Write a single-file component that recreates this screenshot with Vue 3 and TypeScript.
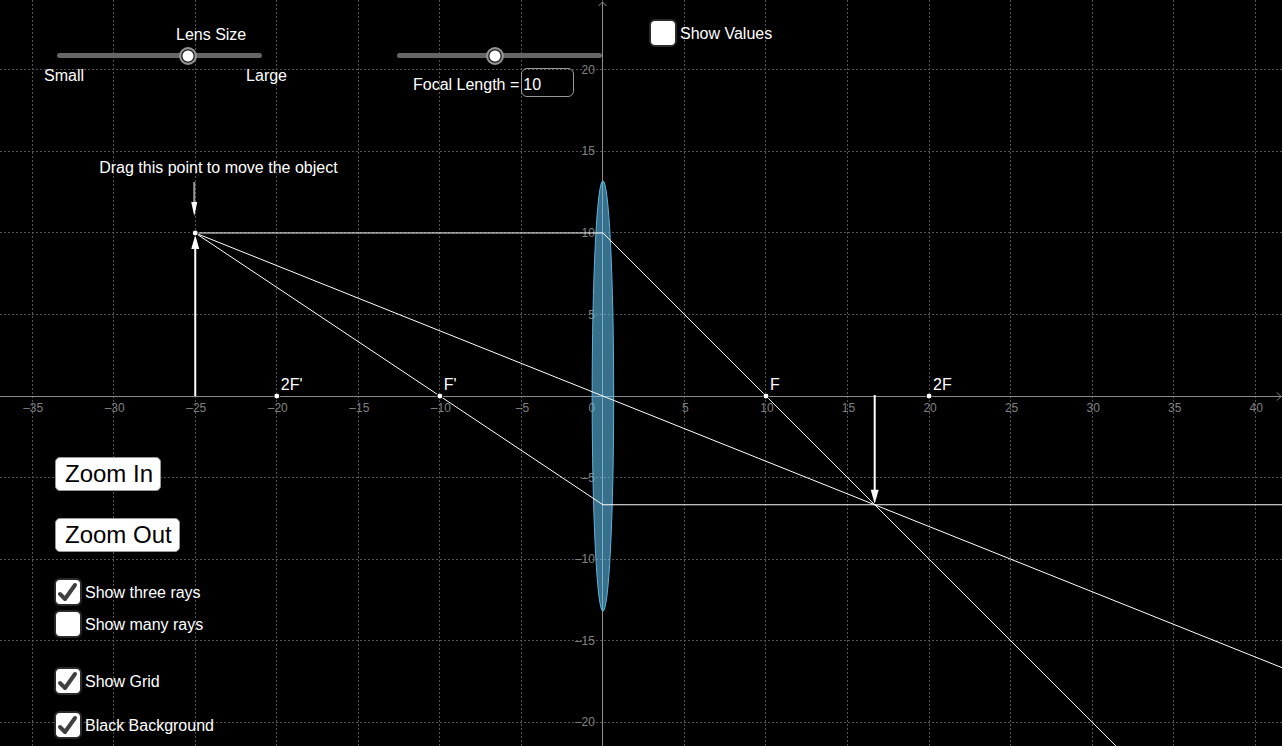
<script setup lang="ts">
import { computed, onBeforeUnmount, onMounted, ref } from 'vue'

interface Point {
  x: number
  y: number
}

const frame = 2
const width = ref(window.innerWidth - frame)
const height = ref(window.innerHeight - frame)

function resize() {
  width.value = window.innerWidth - frame
  height.value = window.innerHeight - frame
}
onMounted(() => window.addEventListener('resize', resize))
onBeforeUnmount(() => window.removeEventListener('resize', resize))

const lensSize = ref(13.2)
const focal = ref(10)
const showValues = ref(false)
const threeRays = ref(true)
const manyRays = ref(false)
const showGrid = ref(true)
const blackBackground = ref(true)
const unit = ref(16.307)

const origin = computed<Point>(() => ({ x: width.value * 0.4703, y: height.value * 0.5309 }))
const object: Point = { x: -25, y: 10 }

const px = (x: number) => origin.value.x + x * unit.value
const py = (y: number) => origin.value.y - y * unit.value
const crisp = (v: number) => Math.floor(v) + 0.5

const image = computed<Point>(() => {
  const x = (object.x * focal.value) / (object.x + focal.value)
  return { x, y: (object.y * x) / object.x }
})

function ticks(from: number, to: number): number[] {
  const out: number[] = []
  for (let v = Math.ceil(from / 5) * 5; v <= to; v += 5) out.push(v)
  return out
}
const xTicks = computed(() => ticks(-origin.value.x / unit.value, (width.value - origin.value.x) / unit.value))
const yTicks = computed(() => ticks((origin.value.y - height.value) / unit.value, origin.value.y / unit.value))
const label = (v: number) => (v < 0 ? '–' + -v : String(v))

function ray(h: number): string {
  const far = 100
  const slope = (image.value.y - h) / image.value.x
  return [
    [object.x, object.y],
    [0, h],
    [far, h + slope * far],
  ]
    .map(([x, y]) => `${px(x)},${py(y)}`)
    .join(' ')
}
const rays = computed(() => {
  const heights: number[] = []
  if (threeRays.value) heights.push(object.y, 0, image.value.y)
  if (manyRays.value) for (let i = -6; i <= 6; i++) heights.push((i * lensSize.value) / 6)
  return heights.map(ray)
})

const foci = computed(() => [
  { name: "2F'", x: -2 * focal.value },
  { name: "F'", x: -focal.value },
  { name: 'F', x: focal.value },
  { name: '2F', x: 2 * focal.value },
])

function head(x: number, y: number, dir: number, half: number): string {
  return `${x},${y} ${x - half},${y + 14 * dir} ${x + half},${y + 14 * dir}`
}
</script>

<template>
  <main class="applet" :class="{ light: !blackBackground }">
    <svg class="plane" role="img" aria-label="Ray diagram of a converging lens">
      <g v-if="showGrid" class="grid">
        <line v-for="v in xTicks" :key="'gx' + v" :x1="crisp(px(v))" y1="0" :x2="crisp(px(v))" :y2="height" />
        <line v-for="v in yTicks" :key="'gy' + v" x1="0" :y1="crisp(py(v))" :x2="width" :y2="crisp(py(v))" />
      </g>
      <g class="axes">
        <line x1="0" :y1="crisp(py(0))" :x2="width" :y2="crisp(py(0))" />
        <line :x1="crisp(px(0))" y1="2" :x2="crisp(px(0))" :y2="height" />
        <polyline :points="`${crisp(px(0)) - 4},6 ${crisp(px(0))},2 ${crisp(px(0)) + 4},6`" />
        <polyline :points="`${width - 5},${crisp(py(0)) - 4} ${width - 1},${crisp(py(0))} ${width - 5},${crisp(py(0)) + 4}`" />
      </g>
      <g class="numbers">
        <template v-for="v in xTicks" :key="'nx' + v">
          <text :x="v === 0 ? px(0) - 11 : px(v) + 1" :y="py(0) + 16" text-anchor="middle">{{ label(v) }}</text>
        </template>
        <template v-for="v in yTicks" :key="'ny' + v">
          <text v-if="v !== 0" :x="px(0) - 8" :y="py(v) + 4" text-anchor="end">{{ label(v) }}</text>
        </template>
      </g>

      <ellipse class="lens" :cx="px(0)" :cy="py(0)" :rx="(lensSize / 20) * unit" :ry="lensSize * unit" />

      <polyline v-for="(r, i) in rays" :key="'r' + i" class="ray" :points="r" />

      <g class="arrow">
        <line :x1="px(object.x)" :y1="py(0)" :x2="px(object.x)" :y2="py(object.y) + 12" />
        <polygon :points="head(px(object.x), py(object.y) + 2, 1, 4)" />
        <line :x1="px(image.x)" :y1="py(0) - 1" :x2="px(image.x)" :y2="py(image.y) - 12" />
        <polygon :points="head(px(image.x), py(image.y) - 1, -1, 4)" />
      </g>

      <g class="hint">
        <text :x="px(object.x) - 96" :y="py(object.y) - 60">Drag this point to move the object</text>
        <line :x1="px(object.x) - 1" :y1="py(object.y) - 51" :x2="px(object.x) - 1" :y2="py(object.y) - 30" />
        <polygon :points="head(px(object.x) - 1, py(object.y) - 17, -1, 3)" />
      </g>

      <circle class="point" :cx="px(object.x)" :cy="py(object.y)" r="3" />
      <g v-for="f in foci" :key="f.name">
        <circle class="point" :cx="px(f.x)" :cy="py(0)" r="3" />
        <text class="name" :x="px(f.x) + 4" :y="py(0) - 6">{{ f.name }}</text>
      </g>
    </svg>

    <header class="top">
      <div class="lens-size">
        <label for="lens-size" class="title">Lens Size</label>
        <input id="lens-size" v-model.number="lensSize" class="slider" type="range" min="0.5" max="20" step="0.1" />
        <div class="ends"><span>Small</span><span>Large</span></div>
      </div>
      <div class="focal">
        <input v-model.number="focal" class="slider" type="range" min="1" max="20" step="0.5" aria-label="Focal length" />
        <div class="field">
          <label for="focal">Focal Length =</label>
          <input id="focal" v-model.number="focal" class="number" type="text" />
        </div>
      </div>
      <label class="check">
        <input v-model="showValues" type="checkbox" />
        <svg viewBox="0 0 28 28" aria-hidden="true"><path d="M6 16L11 21L21 7" /></svg>
        <span>Show Values</span>
      </label>
    </header>

    <aside class="side">
      <div class="buttons">
        <button type="button" @click="unit *= 1.1">Zoom In</button>
        <button type="button" @click="unit /= 1.1">Zoom Out</button>
      </div>
      <div class="options rays">
        <label class="check">
          <input v-model="threeRays" type="checkbox" />
          <svg viewBox="0 0 28 28" aria-hidden="true"><path d="M6 16L11 21L21 7" /></svg>
          <span>Show three rays</span>
        </label>
        <label class="check">
          <input v-model="manyRays" type="checkbox" />
          <svg viewBox="0 0 28 28" aria-hidden="true"><path d="M6 16L11 21L21 7" /></svg>
          <span>Show many rays</span>
        </label>
      </div>
      <div class="options view">
        <label class="check">
          <input v-model="showGrid" type="checkbox" />
          <svg viewBox="0 0 28 28" aria-hidden="true"><path d="M6 16L11 21L21 7" /></svg>
          <span>Show Grid</span>
        </label>
        <label class="check">
          <input v-model="blackBackground" type="checkbox" />
          <svg viewBox="0 0 28 28" aria-hidden="true"><path d="M6 16L11 21L21 7" /></svg>
          <span>Black Background</span>
        </label>
      </div>
    </aside>
  </main>
</template>

<style>
body {
  background: #fff;
}
</style>

<style scoped>
.applet {
  --ink: #fff;
  --paper: #000;
  position: relative;
  display: flex;
  flex-direction: column;
  justify-content: space-between;
  box-sizing: border-box;
  min-height: calc(100vh - 2px);
  margin: 0 2px 2px 0;
  overflow: hidden;
  background: var(--paper);
  color: var(--ink);
  font: 16px/20px "Liberation Sans", Arial, sans-serif;
}
.applet.light {
  --ink: #000;
  --paper: #fff;
}
.plane {
  position: absolute;
  inset: 0;
  width: 100%;
  height: 100%;
}
.grid line {
  stroke: #545454;
  stroke-width: 1;
  stroke-dasharray: 2 2;
}
.axes line,
.axes polyline {
  fill: none;
  stroke: #8c8c8c;
  stroke-width: 1;
}
.numbers text {
  fill: #808080;
  font-size: 12px;
}
.lens {
  fill: #6cf;
  fill-opacity: 0.55;
  stroke: #5ab4e0;
  stroke-width: 1;
}
.ray {
  fill: none;
  stroke: var(--ink);
  stroke-width: 1;
}
.arrow line {
  stroke: var(--ink);
  stroke-width: 2;
}
.arrow polygon,
.hint polygon,
.hint text,
.name {
  fill: var(--ink);
}
.hint line {
  stroke: #999;
  stroke-width: 2;
}
.point {
  fill: var(--ink);
  stroke: var(--paper);
  stroke-width: 1;
}
.top {
  position: relative;
  display: flex;
  align-items: flex-start;
  padding: 19px 0 0 44px;
}
.lens-size {
  display: grid;
  gap: 1px;
  width: 243px;
  margin-right: 110px;
  padding-top: 6px;
}
.title {
  padding-left: 132px;
}
.lens-size .slider {
  margin-left: 13px;
}
.ends {
  display: flex;
  justify-content: space-between;
}
.focal {
  display: grid;
  gap: 3px;
  width: 205px;
  margin-right: 47px;
  padding-top: 27px;
}
.field {
  display: flex;
  align-items: baseline;
  gap: 2px;
  padding-left: 16px;
}
.number {
  box-sizing: border-box;
  width: 53px;
  height: 29px;
  padding: 4px 1px 0;
  border: 1px solid #999;
  border-radius: 6px;
  background: none;
  color: inherit;
  font: inherit;
}
.slider {
  appearance: none;
  width: 205px;
  height: 19px;
  margin: 0;
  background: none;
}
.slider::-webkit-slider-runnable-track {
  height: 5px;
  border-radius: 3px;
  background: #666;
}
.slider::-webkit-slider-thumb {
  appearance: none;
  box-sizing: border-box;
  width: 18px;
  height: 18px;
  margin-top: -6px;
  border: 2px solid #949494;
  border-radius: 50%;
  background: radial-gradient(circle, #fff 5px, #111 6px, #555 7px);
}
.check {
  position: relative;
  display: flex;
  align-items: center;
  gap: 3px;
}
.check span {
  padding-top: 2px;
}
.check input {
  appearance: none;
  box-sizing: border-box;
  width: 28px;
  height: 28px;
  margin: 0;
  border: 2px solid #2a2a2a;
  border-radius: 6px;
  background: #fff;
}
.check svg {
  position: absolute;
  left: 0;
  top: 0;
  width: 28px;
  height: 28px;
  visibility: hidden;
  pointer-events: none;
}
.check input:checked + svg {
  visibility: visible;
}
.check path {
  fill: none;
  stroke: #404040;
  stroke-width: 4;
  stroke-linecap: round;
  stroke-linejoin: round;
}
.side {
  position: relative;
  display: grid;
  justify-items: start;
  align-self: flex-start;
  padding: 0 0 7px 54px;
}
.buttons {
  display: grid;
  justify-items: start;
  gap: 27px;
  margin: 0 0 26px 1px;
}
.buttons button {
  height: 34px;
  padding: 0 7px 0 9px;
  border: 1px solid #999;
  border-radius: 5px;
  background: #fff;
  color: #000;
  font: 24px/30px "Liberation Sans", Arial, sans-serif;
}
.options {
  display: grid;
}
.rays {
  gap: 4px;
  margin-bottom: 29px;
}
.view {
  gap: 16px;
}
</style>
